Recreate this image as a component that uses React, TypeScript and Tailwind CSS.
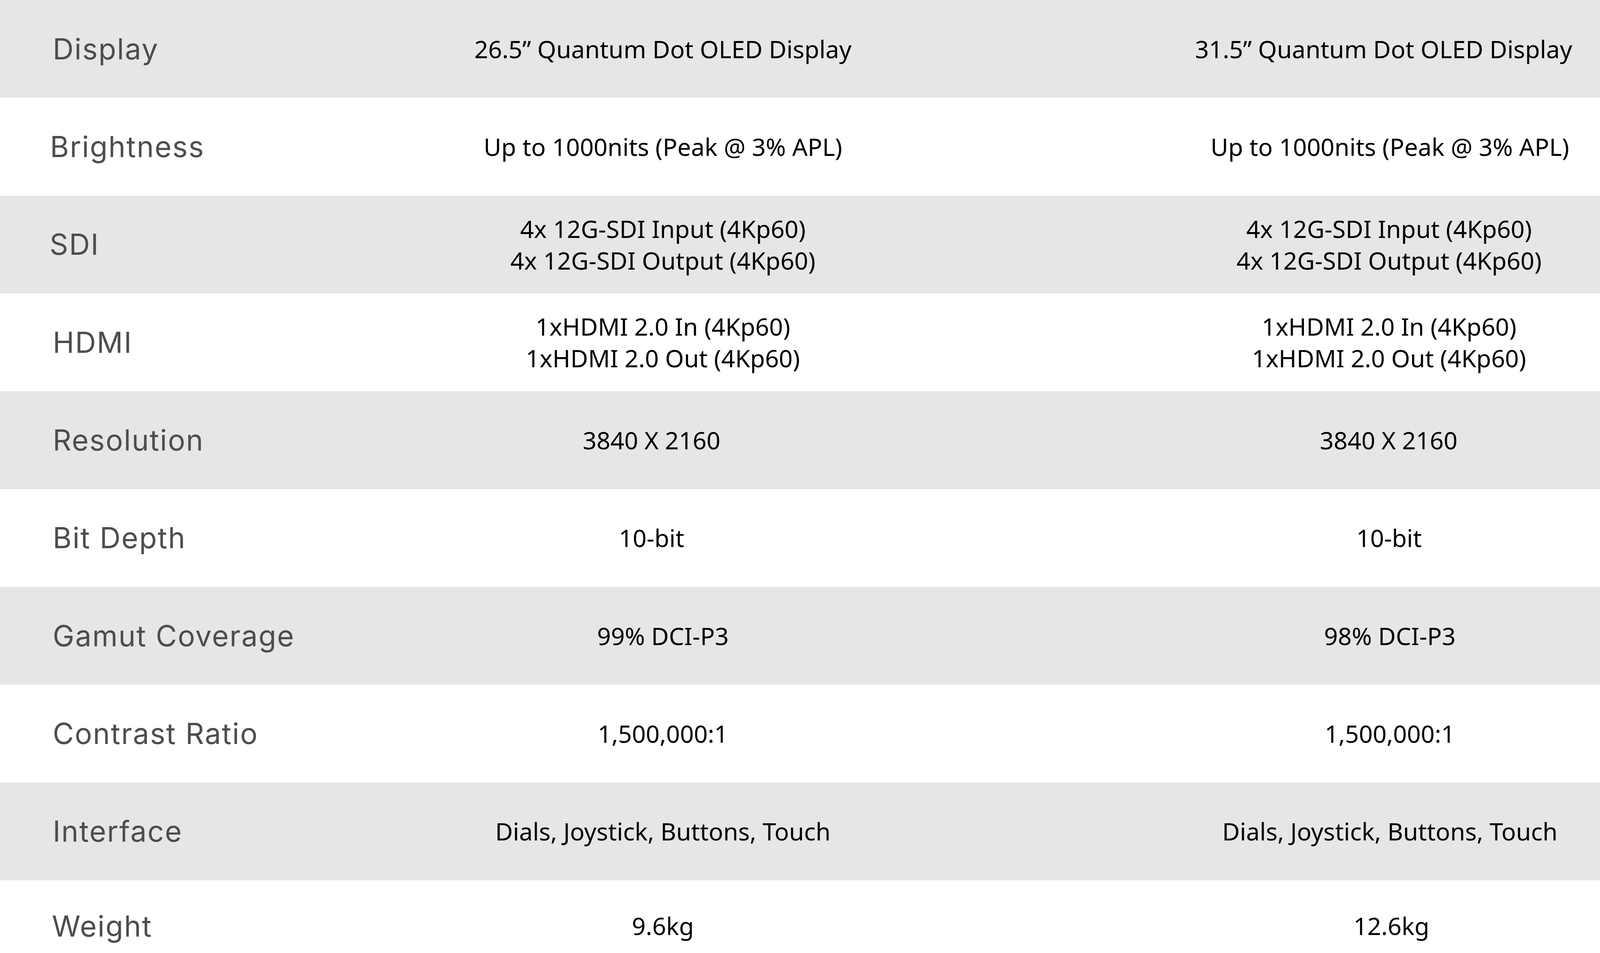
import React from "react";

type Row = {
  label: string;
  a: string[];
  b: string[];
  grey: boolean;
  labelPad: string;
  aPad: string;
  bPad: string;
  h: string;
};

const rows: Row[] = [
  { label: "Display", a: ["26.5\u201D Quantum Dot OLED Display"], b: ["31.5\u201D Quantum Dot OLED Display"], grey: true, labelPad: "pl-[135px]", aPad: "", bPad: "pl-[190px]", h: "h-[250.33px]" },
  { label: "Brightness", a: ["Up to 1000nits (Peak @ 3% APL)"], b: ["Up to 1000nits (Peak @ 3% APL)"], grey: false, labelPad: "pl-[128px]", aPad: "", bPad: "pl-[222px]", h: "h-[250.33px]" },
  { label: "SDI", a: ["4x 12G-SDI Input (4Kp60)", "4x 12G-SDI Output (4Kp60)"], b: ["4x 12G-SDI Input (4Kp60)", "4x 12G-SDI Output (4Kp60)"], grey: true, labelPad: "pl-[127px]", aPad: "", bPad: "pl-[218px]", h: "h-[250.33px]" },
  { label: "HDMI", a: ["1xHDMI 2.0 In (4Kp60)", "1xHDMI 2.0 Out (4Kp60)"], b: ["1xHDMI 2.0 In (4Kp60)", "1xHDMI 2.0 Out (4Kp60)"], grey: false, labelPad: "pl-[135px]", aPad: "", bPad: "pl-[218px]", h: "h-[250.33px]" },
  { label: "Resolution", a: ["3840 X 2160"], b: ["3840 X 2160"], grey: true, labelPad: "pl-[135px]", aPad: "pr-[58px]", bPad: "pl-[216px]", h: "h-[250.33px]" },
  { label: "Bit Depth", a: ["10-bit"], b: ["10-bit"], grey: false, labelPad: "pl-[135px]", aPad: "pr-[58px]", bPad: "pl-[218px]", h: "h-[250.33px]" },
  { label: "Gamut Coverage", a: ["99% DCI-P3"], b: ["98% DCI-P3"], grey: true, labelPad: "pl-[135px]", aPad: "", bPad: "pl-[222px]", h: "h-[250.33px]" },
  { label: "Contrast Ratio", a: ["1,500,000:1"], b: ["1,500,000:1"], grey: false, labelPad: "pl-[135px]", aPad: "", bPad: "pl-[222px]", h: "h-[250.33px]" },
  { label: "Interface", a: ["Dials, Joystick, Buttons, Touch"], b: ["Dials, Joystick, Buttons, Touch"], grey: true, labelPad: "pl-[135px]", aPad: "", bPad: "pl-[222px]", h: "h-[250.33px]" },
  { label: "Weight", a: ["9.6kg"], b: ["12.6kg"], grey: false, labelPad: "pl-[133px]", aPad: "", bPad: "pl-[230px]", h: "h-[234px]" },
];

function Cell({ lines, pad }: { lines: string[]; pad: string }) {
  return (
    <div className={`flex flex-col items-center justify-center text-center ${pad}`}>
      {lines.map((l, i) => (
        <div key={i} className="whitespace-nowrap">
          {l}
        </div>
      ))}
    </div>
  );
}

export default function App() {
  return (
    <div className="w-[4268px] h-[2439px] overflow-hidden bg-white">
      {rows.map((r) => (
        <div
          key={r.label}
          className={`grid grid-cols-[768px_1858px_1642px] ${r.h} ${r.grey ? "bg-[#e6e6e6]" : "bg-white"}`}
        >
          <div
            className={`flex items-center ${r.labelPad} text-[74px] leading-[1.2] tracking-[0.03em] text-[#4d4d4d] font-normal`}
            style={{ fontFamily: "Inter, 'Noto Sans', sans-serif" }}
          >
            {r.label}
          </div>
          <div
            className="flex items-center justify-center text-[62px] leading-[81px] text-black"
            style={{ fontFamily: "'Noto Sans', 'Open Sans', sans-serif" }}
          >
            <Cell lines={r.a} pad={r.aPad} />
          </div>
          <div
            className="flex items-center justify-center text-[62px] leading-[81px] text-black"
            style={{ fontFamily: "'Noto Sans', 'Open Sans', sans-serif" }}
          >
            <Cell lines={r.b} pad={r.bPad} />
          </div>
        </div>
      ))}
    </div>
  );
}
